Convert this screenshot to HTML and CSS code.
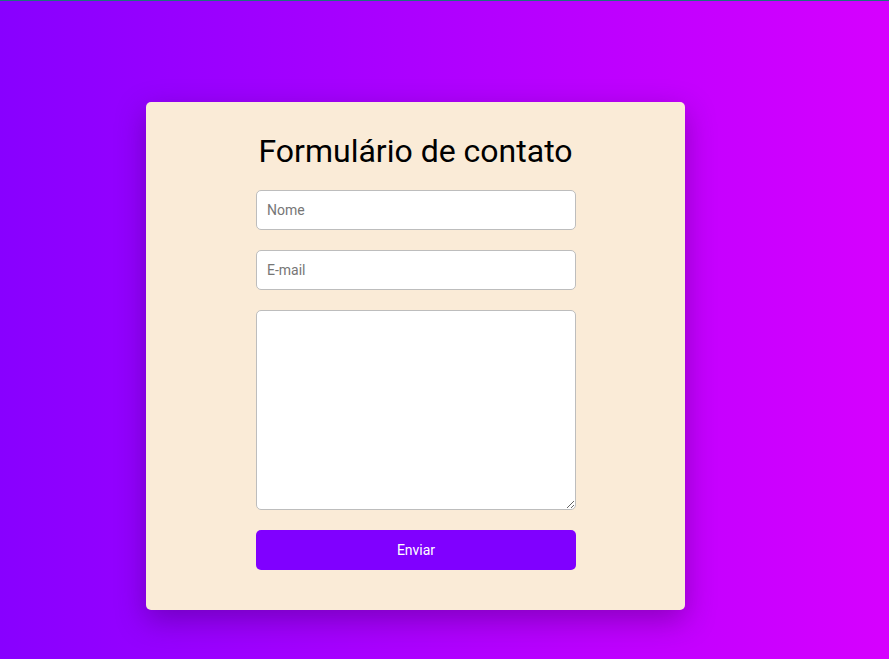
FILE: index.html
```html
<!DOCTYPE html>
<html lang="pt">
<head>
<meta charset="utf-8">
<title>Formulário de contato</title>
<link rel="stylesheet" href="styles.css">
</head>
<body>
<div class="topline"></div>
<main class="page">
  <section class="card">
    <h1 class="title">Formulário de contato</h1>
    <form class="form">
      <input class="field" type="text" placeholder="Nome" autofocus>
      <input class="field" type="email" placeholder="E-mail">
      <textarea class="field area"></textarea>
      <button class="submit" type="button">Enviar</button>
    </form>
  </section>
</main>
</body>
</html>
```
FILE: styles.css
```css
html, body {
  margin: 0;
  padding: 0;
  height: 100%;
}
body {
  background: linear-gradient(to right, #8800ff, #d600ff);
  font-family: Roboto, "Liberation Sans", sans-serif;
  overflow: hidden;
}
.topline {
  height: 1px;
  background: #1f7080;
}
.page {
  padding: 101px 0 0 146px;
}
.card {
  width: 539px;
  box-sizing: border-box;
  background: #faebd7;
  border-radius: 5px;
  padding: 31px 0 40px;
  box-shadow: 0 10px 30px rgba(40, 0, 70, 0.35);
  display: flex;
  flex-direction: column;
  align-items: center;
}
.title {
  margin: 0 0 20px;
  font-size: 32px;
  line-height: 37px;
  font-weight: 400;
  color: #000;
}
.form {
  width: 320px;
  display: flex;
  flex-direction: column;
  gap: 20px;
  margin-left: 1px;
}
.field {
  box-sizing: border-box;
  width: 320px;
  height: 40px;
  border: 1px solid #bdbdbd;
  border-radius: 5px;
  background: #fff;
  padding: 0 10px;
  font-family: Roboto, "Liberation Sans", sans-serif;
  font-size: 14px;
  color: #222;
  outline: none;
}
.field::placeholder {
  color: #767676;
}
.area {
  height: 200px;
  padding: 10px;
  resize: vertical;
}
.submit {
  height: 40px;
  border: none;
  border-radius: 5px;
  background: #8000ff;
  color: #fff;
  font-family: Roboto, "Liberation Sans", sans-serif;
  font-size: 14px;
  cursor: pointer;
}
```
